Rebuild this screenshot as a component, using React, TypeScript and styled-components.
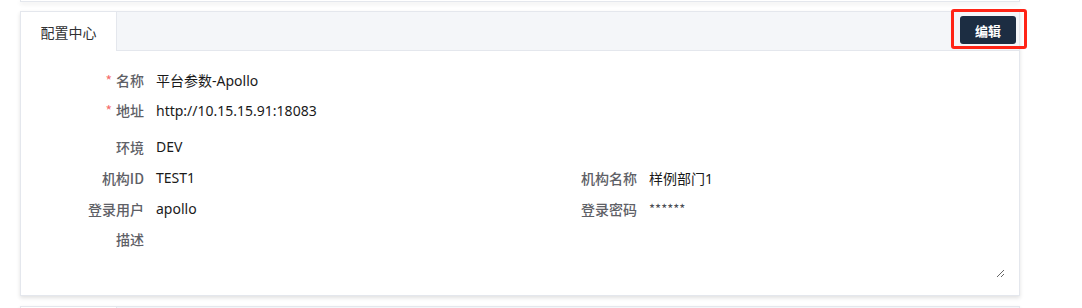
import styled, { createGlobalStyle } from 'styled-components'

const GlobalStyle = createGlobalStyle`
  html, body {
    margin: 0;
    padding: 0;
    background: #ffffff;
  }
  body {
    font-family: 'Noto Sans CJK SC', 'Noto Sans', sans-serif;
    font-size: 14px;
    color: #1f2329;
  }
`

type Field = { label: string; value?: string; required?: boolean; masked?: boolean }

const topFields: Field[] = [
  { label: '名称', value: '平台参数-Apollo', required: true },
  { label: '地址', value: 'http://10.15.15.91:18083', required: true },
]

const gridFields: Field[][] = [
  [{ label: '环境', value: 'DEV' }],
  [
    { label: '机构ID', value: 'TEST1' },
    { label: '机构名称', value: '样例部门1' },
  ],
  [
    { label: '登录用户', value: 'apollo' },
    { label: '登录密码', value: '******', masked: true },
  ],
]

export default function App() {
  return (
    <Page>
      <GlobalStyle />
      <PrevCard />
      <Card>
        <Header>
          <Tab $active>{`配置中心`}</Tab>
          <HeaderFill />
          <Highlight>
            <EditButton>{`编辑`}</EditButton>
          </Highlight>
        </Header>
        <Body>
          {topFields.map((field) => (
            <Row key={field.label} $height={30}>
              <Item>
                <Label $required={field.required}>{field.label}</Label>
                <Value>{field.value}</Value>
              </Item>
            </Row>
          ))}
          <Group>
            {gridFields.map((row) => (
              <Row key={row[0].label} $height={31}>
                {row.map((field) => (
                  <Item key={field.label}>
                    <Label>{field.label}</Label>
                    <Value $masked={field.masked}>{field.value}</Value>
                  </Item>
                ))}
              </Row>
            ))}
            <DescRow>
              <Label>{`描述`}</Label>
              <Description readOnly />
            </DescRow>
          </Group>
        </Body>
      </Card>
      <NextCard>
        <Header>
          <Tab $active>{`\u00a0`}</Tab>
          <HeaderFill />
        </Header>
      </NextCard>
    </Page>
  )
}

const Page = styled.div`
  width: 1082px;
  height: 308px;
  overflow: hidden;
  padding: 0 0 0 20px;
  box-sizing: border-box;
  display: flex;
  flex-direction: column;
  gap: 9px;
`

const PrevCard = styled.div`
  width: 1000px;
  height: 2px;
  flex-shrink: 0;
  background: #ffffff;
  box-sizing: border-box;
  border: 1px solid #e4e7ed;
  border-top: 0;
  box-shadow: 0 2px 4px rgba(0, 0, 0, 0.1);
`

const Card = styled.div`
  width: 1000px;
  height: 285px;
  flex-shrink: 0;
  box-sizing: border-box;
  background: #ffffff;
  border: 1px solid #e4e7ed;
  box-shadow: 0 2px 4px rgba(0, 0, 0, 0.12);
  display: flex;
  flex-direction: column;
`

const NextCard = styled(Card)`
  margin-top: 1px;
`

const Header = styled.div`
  display: flex;
  height: 39px;
  flex-shrink: 0;
  box-sizing: border-box;
  background: #f4f6f9;
  border-bottom: 1px solid #e4e7ed;
`

const Tab = styled.div<{ $active?: boolean }>`
  width: 96px;
  box-sizing: border-box;
  display: flex;
  align-items: center;
  justify-content: center;
  font-size: 14px;
  color: #303133;
  background: ${(p) => (p.$active ? '#ffffff' : 'transparent')};
  border-right: 1px solid #e4e7ed;
  margin-bottom: -1px;
`

const HeaderFill = styled.div`
  flex: 1;
`

const Highlight = styled.div`
  position: relative;
  align-self: flex-start;
  margin: 4px 3px 0 0;

  &::after {
    content: '';
    position: absolute;
    top: -7px;
    left: -9px;
    right: -11px;
    bottom: -5px;
    border: 3px solid #ff2416;
    border-radius: 3px;
    pointer-events: none;
  }
`

const EditButton = styled.button`
  width: 56px;
  height: 28px;
  border: 0;
  border-radius: 3px;
  background: #1c2d42;
  color: #ffffff;
  font-family: 'Noto Sans CJK SC', sans-serif;
  font-size: 13px;
  font-weight: 700;
  cursor: pointer;
  padding: 0;
`

const Body = styled.div`
  padding: 14px 0 0 6px;
  display: flex;
  flex-direction: column;
`

const Group = styled.div`
  margin-top: 6px;
  display: flex;
  flex-direction: column;
`

const Row = styled.div<{ $height: number }>`
  height: ${(p) => p.$height}px;
  display: grid;
  grid-template-columns: 493px 493px;
  align-items: center;
`

const Item = styled.div`
  display: flex;
  align-items: center;
`

const Label = styled.div<{ $required?: boolean }>`
  width: 117px;
  flex-shrink: 0;
  text-align: right;
  font-size: 14px;
  line-height: 30px;
  font-weight: 500;
  color: #5e6066;

  &::before {
    content: ${(p) => (p.$required ? "'*'" : 'none')};
    color: #f56c6c;
    margin-right: 4px;
    font-weight: 400;
  }
`

const Value = styled.div<{ $masked?: boolean }>`
  padding-left: 12px;
  font-family: ${(p) =>
    p.$masked ? "'Noto Sans CJK SC', sans-serif" : "'Noto Sans', 'Noto Sans CJK SC', sans-serif"};
  font-size: ${(p) => (p.$masked ? '13px' : '14px')};
  color: ${(p) => (p.$masked ? '#4a4d52' : '#1a1a1a')};
  white-space: nowrap;
`

const DescRow = styled.div`
  display: flex;
  align-items: flex-start;
`

const Description = styled.textarea`
  margin-left: 12px;
  width: 849px;
  height: 54px;
  border: 0;
  outline: none;
  padding: 0;
  font-family: inherit;
  font-size: 14px;
  background: transparent;
  resize: vertical;
`
